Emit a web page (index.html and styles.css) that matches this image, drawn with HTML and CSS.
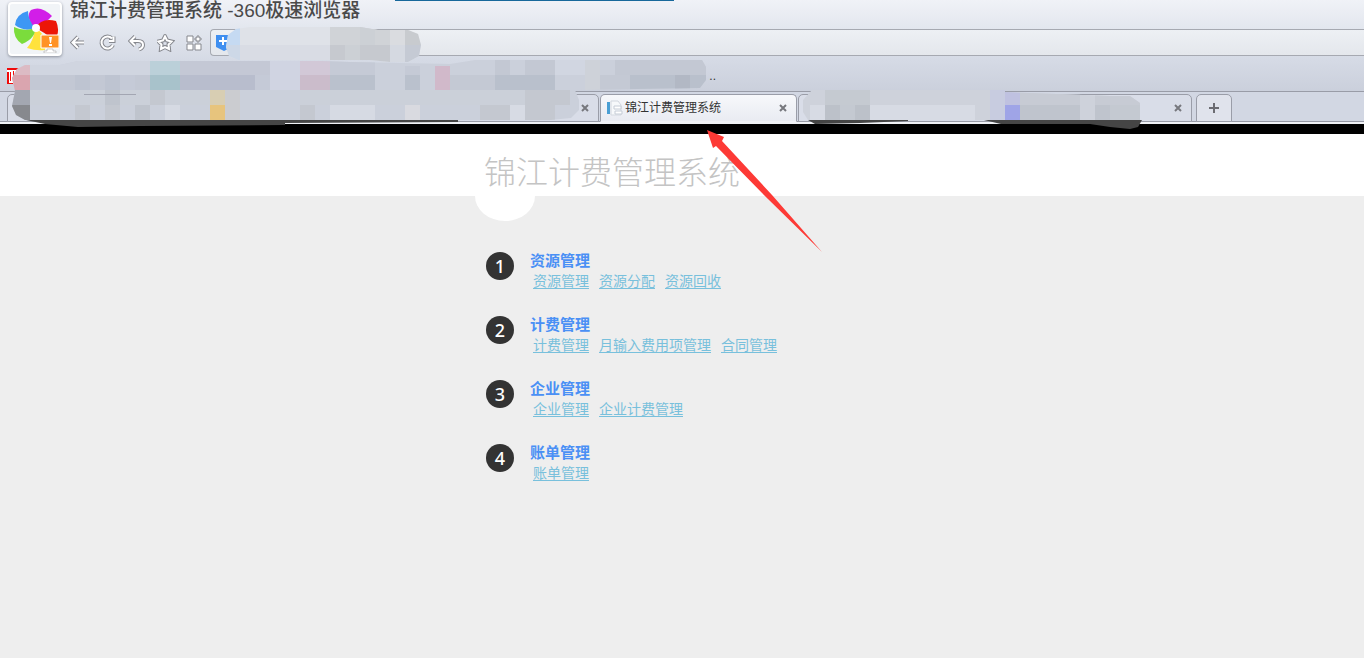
FILE: index.html
```html
<!DOCTYPE html>
<html lang="zh-CN">
<head>
<meta charset="utf-8">
<title>锦江计费管理系统</title>
<link rel="stylesheet" href="styles.css">
</head>
<body>
<header class="browser">
  <div class="browser-top">
    <div class="logo">
      <svg width="48" height="48" viewBox="0 0 48 48" aria-hidden="true">
        <path d="M24 23C17 17 16 9 20 5Q30 0 41 11Q33 20 24 23Z" fill="#d21ee8"/>
        <path d="M24 23Q31 12 45 16Q50 27 43 36Q34 27 24 23Z" fill="#ec1608"/>
        <path d="M24 23Q36 29 34 45Q25 46 16 43Q23 35 24 23Z" fill="#ffe23c"/>
        <path d="M24 23Q25 33 11 39Q2 33 3 22Q13 27 24 23Z" fill="#7bdc3c"/>
        <path d="M24 23Q13 27 4 20Q5 9 17 6Q17 15 24 23Z" fill="#3d97f4"/>
        <circle cx="25" cy="23" r="4" fill="#fff"/>
        <path d="M30 30H48V43H30Z" fill="#ff9225" stroke="#fff" stroke-width="1"/>
        <path d="M38 32H41L40 38H39ZM38 39H41V41H38Z" fill="#fff"/>
        <path d="M36 44H42V46H45V48H33V46H36Z" fill="#fff" stroke="#999" stroke-width=".5"/>
      </svg>
    </div>
    <div class="browser-main">
      <div class="window-title">锦江计费管理系统 -360极速浏览器</div>
      <div class="toolbar">
        <button class="tool" type="button" aria-label="后退"><svg width="18" height="18" viewBox="0 0 18 18"><path class="edge" d="M8 3L2.500 8.500L8 14M3 8.500H14"/><path class="core" d="M8 3L2.500 8.500L8 14M3 8.500H14"/></svg></button>
        <button class="tool" type="button" aria-label="刷新"><svg width="18" height="18" viewBox="0 0 18 18"><path class="edge" d="M13 4.500A6 6 0 1 0 14 11M14.500 2.500V7H10"/><path class="core" d="M13 4.500A6 6 0 1 0 14 11M14.500 2.500V7H10"/></svg></button>
        <button class="tool" type="button" aria-label="撤销"><svg width="18" height="18" viewBox="0 0 18 18"><path class="edge" d="M7 2.500L2.500 7L7 11.500M3 7H10Q15 7 15 11Q15 14 11 15.500"/><path class="core" d="M7 2.500L2.500 7L7 11.500M3 7H10Q15 7 15 11Q15 14 11 15.500"/></svg></button>
        <button class="tool" type="button" aria-label="收藏"><svg width="18" height="18" viewBox="0 0 18 18"><path class="edge" d="M8 2.500L10 6.500L14.500 7.500L11.500 10.500L12 15L8 13L4 15L4.500 10.500L1.500 7.500L6 6.500Z"/><path class="core" d="M8 2.500L10 6.500L14.500 7.500L11.500 10.500L12 15L8 13L4 15L4.500 10.500L1.500 7.500L6 6.500Z"/></svg></button>
        <button class="tool" type="button" aria-label="应用"><svg width="18" height="18" viewBox="0 0 18 18"><path class="tile" d="M1 2H7V8H1ZM1 10H7V16H1ZM9 10H15V16H9ZM9 4H11V2H13V4H15V6H13V8H11V6H9Z"/></svg></button>
        <div class="address">
          <svg width="16" height="16" viewBox="0 0 16 16" aria-hidden="true"><path d="M0 0H16V12L8 16L0 12Z" fill="#3f8ff0"/><path d="M6 2H8V5H11V7H8V10H6V7H3V5H6Z" fill="#fff"/></svg>
          <input class="address-input" type="text" aria-label="地址栏">
        </div>
      </div>
    </div>
  </div>
  <div class="bookmarks">
    <svg width="16" height="16" viewBox="0 0 16 16" aria-hidden="true"><path d="M0 0H16V16H0Z" fill="#fff"/><path d="M0 0H16V2H0ZM0 4H2V16H0ZM3 4H4V13H3ZM6 3H7V13H6ZM9 3H11V13H9ZM2 15H6V16H2Z" fill="#f00a0a"/></svg>
    <span class="more">..</span>
  </div>
  <nav class="tabs" aria-label="标签页">
    <div class="tab tab-first"><button class="close" type="button" aria-label="关闭"><svg width="8" height="8" viewBox="0 0 8 8"><path d="M1 1L7 7M7 1L1 7"/></svg></button></div>
    <div class="tab tab-active">
      <svg width="16" height="16" viewBox="0 0 16 16" aria-hidden="true"><path d="M0 2H3V14H0Z" fill="#4a9fd4"/><path d="M4 1H11L14 5V15H4Z" fill="#f7f9fb" stroke="#d3d8df"/><path d="M7 6H14V9H7ZM8 11H15V14H8Z" fill="#fff" stroke="#c5ccd6"/></svg>
      <span class="tab-label">锦江计费管理系统</span>
      <button class="close" type="button" aria-label="关闭"><svg width="8" height="8" viewBox="0 0 8 8"><path d="M1 1L7 7M7 1L1 7"/></svg></button>
    </div>
    <div class="tab tab-last"><button class="close" type="button" aria-label="关闭"><svg width="8" height="8" viewBox="0 0 8 8"><path d="M1 1L7 7M7 1L1 7"/></svg></button></div>
    <button class="tab-new" type="button" aria-label="新标签页"><svg width="10" height="10" viewBox="0 0 10 10"><path d="M4 0H6V4H10V6H6V10H4V6H0V4H4Z" fill="#6c6c72"/></svg></button>
  </nav>
</header>

<svg class="mask" width="1364" height="135" viewBox="0 0 1364 135" aria-hidden="true">
  <defs>
    <clipPath id="mask-left"><path d="M12 78L17 69L25 65H60L78 61H320L350 62L450 64L475 60H702L706 67V80L700 88L575 90L579 100V110L571 118L550 120H25L16 115L12 106L15 91Z"/></clipPath>
    <clipPath id="mask-address"><path d="M226 47L228 35L236 29L250 27H360L378 30H408L418 34L421 45L419 56L408 62H390L370 60H238L229 56Z"/></clipPath>
    <clipPath id="mask-right"><path d="M803 100L812 90H1005V92L1110 96H1130L1140 103V120H808L803 112Z"/></clipPath>
  </defs>
  <path d="M26 120H458V122L285 123V125L140 126L78 127L45 124ZM808 120H908V121L860 123L815 124ZM984 120H1142L1138 127L1130 129L1110 127L1090 124H1001Z" fill="#454545"/>
  <g clip-path="url(#mask-left)">
    <path d="M0 60H710V121H0Z" fill="#cbd0db"/>
    <path d="M30 61H180V75H30Z" fill="#d0d5e0"/>
    <path d="M30 75H150V90H30Z" fill="#c3c8d4"/>
    <path d="M75 75H90V90H75ZM105 75H120V90H105Z" fill="#bec4d1"/>
    <path d="M0 61H30V75H0Z" fill="#dcbbc4"/><path d="M0 75H30V90H0Z" fill="#daa5af"/>
    <path d="M0 90H30V105H0Z" fill="#a3a7b1"/><path d="M0 105H30V121H0Z" fill="#87898e"/>
    <path d="M150 61H180V75H150Z" fill="#bbd0d9"/><path d="M150 75H180V90H150Z" fill="#a8c2cb"/>
    <path d="M180 61H270V75H180Z" fill="#c4c8d5"/><path d="M180 75H255V90H180Z" fill="#b8bdcd"/>
    <path d="M255 75H270V90H255ZM120 75H135V90H120Z" fill="#c5cad7"/>
    <path d="M270 61H300V90H270Z" fill="#d0d4e2"/>
    <path d="M300 61H330V75H300Z" fill="#d2c8d7"/><path d="M300 75H330V90H300Z" fill="#cbbccb"/>
    <path d="M330 61H375V75H330ZM405 66H420V75H405Z" fill="#c5cad6"/><path d="M330 75H375V90H330ZM405 75H420V90H405Z" fill="#bac1cd"/>
    <path d="M435 66H450V90H435Z" fill="#d1b9ca"/>
    <path d="M495 60H510V75H495ZM525 60H555V75H525ZM615 60H706V75H615Z" fill="#c3c8d3"/>
    <path d="M450 75H495V90H450ZM600 75H630V90H600Z" fill="#c4c9d4"/>
    <path d="M495 75H555V90H495ZM630 75H706V90H630Z" fill="#b9c0cc"/>
    <path d="M675 75H690V90H675Z" fill="#b2b8c4"/>
    <path d="M555 60H585V75H555Z" fill="#d1d6e1"/><path d="M585 60H600V90H585Z" fill="#ced2d9"/>
    <path d="M30 90H210V105H30ZM300 90H525V105H300Z" fill="#cbd0d9"/>
    <path d="M75 105H90V120H75ZM105 105H120V120H105ZM150 90H165V105H150ZM300 105H315V120H300Z" fill="#c4c8d0"/>
    <path d="M105 90H120V105H105ZM135 105H150V120H135Z" fill="#bfc4cd"/>
    <path d="M165 105H180V120H165ZM330 105H375V120H330Z" fill="#d6dae3"/>
    <path d="M405 105H420V120H405Z" fill="#d9dae0"/>
    <path d="M210 90H225V105H210Z" fill="#d8ceb3"/><path d="M210 105H225V120H210Z" fill="#e7c47d"/>
    <path d="M225 90H240V120H225Z" fill="#cbccd0"/>
    <path d="M525 90H570V105H525ZM480 105H510V120H480ZM525 105H555V120H525Z" fill="#c4c8d0"/>
    <path d="M510 105H525V120H510Z" fill="#d7dbe4"/>
  </g>
  <path d="M84 94H136V95H84Z" fill="#a3a6b2"/>
  <g clip-path="url(#mask-address)">
    <path d="M225 25H425V65H225Z" fill="#dfe2e8"/><path d="M225 25H240V45H225Z" fill="#c5daf2"/><path d="M225 45H240V65H225Z" fill="#cdd8e7"/>
    <path d="M240 45H330V65H240Z" fill="#d9dce4"/><path d="M330 25H405V45H330Z" fill="#d0d3d7"/><path d="M330 45H345V65H330ZM360 45H390V65H360Z" fill="#c6c9cf"/>
    <path d="M345 45H360V65H345ZM360 25H375V45H360Z" fill="#ccd0d5"/><path d="M390 25H405V45H390Z" fill="#dadce0"/><path d="M405 25H425V45H405Z" fill="#c8cbcf"/><path d="M390 45H405V65H390Z" fill="#d5d9e1"/><path d="M405 45H425V65H405Z" fill="#c5cad4"/>
  </g>
  <g clip-path="url(#mask-right)">
    <path d="M800 89H1142V121H800Z" fill="#ced2db"/><path d="M810 105H825V120H810ZM870 105H975V120H870Z" fill="#d7dbe4"/>
    <path d="M825 90H870V105H825Z" fill="#c5cad1"/><path d="M825 105H840V120H825ZM855 105H870V120H855Z" fill="#bcc1c9"/><path d="M840 105H855V120H840Z" fill="#c4c9d1"/>
    <path d="M990 90H1005V120H990Z" fill="#c8cce0"/><path d="M1005 90H1020V105H1005Z" fill="#bfc1e0"/><path d="M1005 105H1020V120H1005Z" fill="#9fa4e7"/>
    <path d="M1020 90H1080V105H1020ZM1095 90H1142V105H1095Z" fill="#c7cbd4"/><path d="M1020 105H1080V120H1020ZM1095 105H1110V120H1095Z" fill="#bfc4cd"/><path d="M1110 105H1142V120H1110Z" fill="#c4c9d1"/>
  </g>
  <path d="M395 0H674V1H395Z" fill="#17689b"/>
</svg>

<div class="page-head">
  <h1 class="page-title wrap">锦江计费管理系统</h1>
  <div class="wrap"><div class="notch"></div></div>
</div>

<main class="wrap">
  <ol class="menu">
    <li class="group"><span class="num">1</span><div><h2 class="group-title">资源管理</h2><div class="links"><a href="#">资源管理</a><a href="#">资源分配</a><a href="#">资源回收</a></div></div></li>
    <li class="group"><span class="num">2</span><div><h2 class="group-title">计费管理</h2><div class="links"><a href="#">计费管理</a><a href="#">月输入费用项管理</a><a href="#">合同管理</a></div></div></li>
    <li class="group"><span class="num">3</span><div><h2 class="group-title">企业管理</h2><div class="links"><a href="#">企业管理</a><a href="#">企业计费管理</a></div></div></li>
    <li class="group"><span class="num">4</span><div><h2 class="group-title">账单管理</h2><div class="links"><a href="#">账单管理</a></div></div></li>
  </ol>
</main>

<svg class="arrow" width="116" height="123" viewBox="0 0 116 123" aria-hidden="true"><path d="M0 0L17 7L15 11L65 65L115 122L61 69L9 16L6 18Z" fill="#fd3a36"/></svg>
</body>
</html>
```

FILE: styles.css
```css
* { box-sizing: border-box; }

body {
  margin: 0;
  min-height: 100vh;
  background: #eee;
  font-family: "Liberation Sans", "Noto Sans CJK SC", sans-serif;
}

button {
  padding: 0;
  border: 0;
  background: none;
}

svg { display: block; flex: none; }

/* Browser frame */
.browser {
  border-bottom: 10px solid #000;
  background: linear-gradient(#f0f2f7, #e2e6ee 30px, #d5dae5 60px, #cbd0dc 90px);
}

.browser-top {
  display: flex;
  gap: 8px;
  height: 56px;
  padding-left: 8px;
}

.logo {
  display: flex;
  align-items: center;
  justify-content: center;
  width: 54px;
  height: 54px;
  margin-top: 2px;
  border: 2px solid #fff;
  border-radius: 4px;
  background: #f1f4f7;
  box-shadow: 0 1px 3px #8a8f9a;
}

.browser-main {
  flex: 1;
  min-width: 0;
}

.window-title {
  height: 29px;
  color: #4a4a4a;
  font-size: 19px;
  font-weight: 500;
  line-height: 22px;
  white-space: nowrap;
}

.toolbar {
  display: flex;
  align-items: center;
  height: 27px;
}

.tool {
  width: 18px;
  height: 18px;
  margin-right: 11px;
}

.edge,
.core {
  fill: none;
  stroke: #85878d;
  stroke-width: 4;
}

.core {
  stroke: #fff;
  stroke-width: 2;
}

.tile {
  fill: #fff;
  stroke: #85878d;
}

.tool:nth-child(5) { margin-right: 6px; }

.address {
  display: flex;
  flex: 1;
  align-items: center;
  height: 27px;
  padding-left: 5px;
  border: 1px solid #a6a9b1;
  border-right: 0;
  border-radius: 4px 0 0 4px;
  background: linear-gradient(#edf0f4, #e4e7ec);
}

.address-input {
  flex: 1;
  min-width: 0;
  height: 20px;
  border: 0;
  outline: 0;
  background: none;
}

.bookmarks {
  display: flex;
  align-items: center;
  justify-content: space-between;
  width: 716px;
  max-width: 100%;
  height: 35px;
  padding: 4px 0 0 7px;
}

.more {
  color: #333;
  font-size: 12px;
  line-height: 12px;
}

.tabs {
  display: flex;
  height: 33px;
  padding: 2px 0 0 7px;
  border-top: 1px solid #999ca7;
  border-bottom: 2px solid #f0f2f6;
  background: #d2d7e3;
  box-shadow: inset 0 -1px #9699a5;
}

.tab {
  display: flex;
  align-items: center;
  justify-content: flex-end;
  height: 28px;
  margin-right: 1px;
  padding: 0 9px 0 6px;
  border: 1px solid #9a9da8;
  border-radius: 5px 5px 0 0;
  background: #d9dde8;
}

.tab-first { flex: 0 1 592px; }
.tab-last { flex: 0 1 394px; }

.tab-active {
  flex: 0 0 197px;
  gap: 2px;
  border-bottom-color: #f0f2f6;
  background: linear-gradient(#f7f8fb, #e9ebf2);
}

.tab-label {
  flex: 1;
  color: #333;
  font-size: 12px;
  line-height: 18px;
}

.close {
  width: 8px;
  height: 8px;
}

.close path {
  fill: none;
  stroke: #77787e;
  stroke-width: 2;
}

.tab-new {
  display: flex;
  align-items: center;
  justify-content: center;
  width: 36px;
  height: 28px;
  margin-left: 3px;
  border: 1px solid #9a9da8;
  border-radius: 5px 5px 0 0;
  background: #e0e3ec;
}

/* Pixelated cover over the browser frame */
.mask {
  position: absolute;
  top: 0;
  left: 0;
  pointer-events: none;
}

/* Page */
.wrap {
  width: 396px;
  max-width: 100%;
  margin: 0 auto;
}

.page-head {
  height: 62px;
  background: #fff;
}

.page-title {
  height: 62px;
  padding-top: 12px;
  color: #c4c4c4;
  font-family: "Noto Sans CJK SC", sans-serif;
  font-size: 32px;
  font-weight: 300;
  line-height: 48px;
  white-space: nowrap;
}

.notch {
  width: 60px;
  height: 25px;
  margin-left: -9px;
  border-radius: 0 0 50% 50% / 0 0 100% 100%;
  background: #fff;
}

.menu {
  display: grid;
  gap: 24px;
  margin: 0;
  padding: 55px 0 24px 2px;
  list-style: none;
}

.group {
  display: flex;
  gap: 16px;
  height: 40px;
}

.num {
  width: 28px;
  height: 28px;
  margin-top: 1px;
  border-radius: 50%;
  background: #333;
  color: #fff;
  font-family: "Noto Sans", sans-serif;
  font-size: 18px;
  font-weight: 500;
  line-height: 28px;
  text-align: center;
}

.group-title {
  margin: 0;
  color: #4a90f5;
  font-size: 15px;
  font-weight: 700;
  line-height: 20px;
}

.links {
  display: flex;
  gap: 10px;
  padding-left: 3px;
  white-space: nowrap;
}

.links a {
  color: #78c0dc;
  font-size: 14px;
  line-height: 20px;
  text-underline-offset: 2px;
}

/* Pointer drawn over the page, aimed at the active tab */
.arrow {
  position: absolute;
  top: 130px;
  left: 707px;
  pointer-events: none;
}
```
